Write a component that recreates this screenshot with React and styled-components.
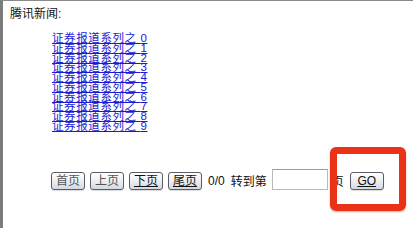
import React from 'react';
import styled, { createGlobalStyle } from 'styled-components';

const GlobalStyle = createGlobalStyle`
  html, body {
    margin: 0;
    padding: 0;
    background: #ffffff;
  }
  body {
    font-family: "Liberation Sans", "Noto Sans CJK SC", sans-serif;
    font-size: 12px;
    color: #111;
  }
`;

const Page = styled.div`
  position: relative;
  box-sizing: border-box;
  width: 413px;
  height: 228px;
  border-top: 1px solid #8a8a8a;
  border-left: 3px solid #7c7c7c;
  overflow: hidden;
`;

const Title = styled.div`
  padding: 5px 0 0 7px;
  height: 16px;
  line-height: 16px;
`;

const LinkList = styled.ul`
  list-style: none;
  margin: 12px 0 0 0;
  padding: 0 0 0 49px;
`;

const NewsLink = styled.a`
  display: block;
  width: max-content;
  height: 9.75px;
  line-height: 9.75px;
  color: #1a1ad2;
  font-size: 11.5px;
  letter-spacing: 0.6px;
  text-decoration: underline;
  text-underline-offset: 1px;
`;

const Pager = styled.div`
  display: flex;
  align-items: center;
  margin: 38px 0 0 48px;
  height: 22px;
`;

const PageButton = styled.button`
  box-sizing: border-box;
  width: 34px;
  height: 18px;
  margin-right: 5px;
  padding: 0;
  border: 1px solid #5a5d66;
  border-radius: 3px;
  background: linear-gradient(#ffffff, #eceef3 50%, #d4d8e1);
  font-family: "Liberation Sans", "Noto Sans CJK SC", sans-serif;
  font-size: 12px;
  line-height: 16px;
  color: ${(p) => (p.disabled ? '#555' : '#111')};
  text-decoration: ${(p) => (p.disabled ? 'none' : 'underline')};
  box-shadow: 0 1px 1px rgba(0, 0, 0, 0.15);
`;

const Label = styled.span`
  margin: 0 ${(p) => p.$gap || 5}px 0 1px;
  white-space: nowrap;
  font-size: 12px;
`;

const PageInput = styled.input`
  box-sizing: border-box;
  width: 56px;
  height: 21px;
  margin: -3px 3px 0 0;
  border: 1px solid #b9b9b9;
  border-top-color: #9a9a9a;
  padding: 0;
`;

const Highlight = styled.div`
  position: absolute;
  left: 327px;
  top: 146px;
  width: 76px;
  height: 64px;
  box-sizing: border-box;
  border: 7px solid #ea3217;
  border-radius: 6px;
  box-shadow: 0 1px 2px rgba(120, 0, 0, 0.35);
`;

export default function App() {
  const items = Array.from({ length: 10 }, (_, i) => i);
  return (
    <>
      <GlobalStyle />
      <Page>
        <Title>腾讯新闻:</Title>
        <LinkList>
          {items.map((i) => (
            <li key={i}>
              <NewsLink href="#">证券报道系列之 {i}</NewsLink>
            </li>
          ))}
        </LinkList>
        <Pager>
          <PageButton disabled>首页</PageButton>
          <PageButton disabled>上页</PageButton>
          <PageButton>下页</PageButton>
          <PageButton>尾页</PageButton>
          <Label>0/0</Label>
          <Label>转到第</Label>
          <PageInput type="text" />
          <Label $gap={6}>页</Label>
          <PageButton>GO</PageButton>
        </Pager>
        <Highlight />
      </Page>
    </>
  );
}
